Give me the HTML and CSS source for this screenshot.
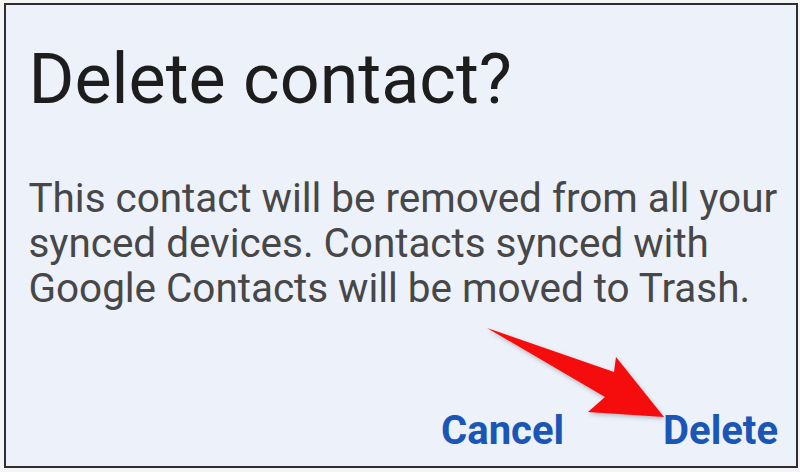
FILE: index.html
```html
<!DOCTYPE html>
<html>
<head>
<meta charset="utf-8">
<link rel="stylesheet" href="styles.css">
</head>
<body>
<div class="dialog">
  <h1 class="title">Delete contact?</h1>
  <p class="message">This contact will be removed from all your<br>synced devices. Contacts synced with<br>Google Contacts will be moved to Trash.</p>
  <div class="actions">
    <span class="btn">Cancel</span>
    <span class="btn">Delete</span>
  </div>
  <svg class="arrow" width="800" height="472" viewBox="0 0 800 472">
    <defs>
      <filter id="sh" x="-20%" y="-20%" width="140%" height="140%">
        <feDropShadow dx="1" dy="2" stdDeviation="2" flood-color="#000" flood-opacity="0.25"/>
      </filter>
    </defs>
    <polygon points="487,328 614,372 616,357 664,417 588,412 605,397" fill="#f50a0a" filter="url(#sh)"/>
  </svg>
</div>
</body>
</html>
```
FILE: styles.css
```css
html, body {
  margin: 0;
  padding: 0;
  background: #f4f4f4;
  width: 800px;
  height: 472px;
  overflow: hidden;
}
.dialog {
  position: relative;
  box-sizing: border-box;
  margin: 3px 0 0 4px;
  width: 794px;
  height: 465px;
  border: 2px solid #2e2e2e;
  background: #edf1fa;
  padding: 32.6px 18px 0 22.5px;
  font-family: Roboto, "Noto Sans", sans-serif;
}
.title {
  margin: 0;
  font-size: 70px;
  line-height: 82px;
  font-weight: 400;
  color: #1d1d1d;
  white-space: nowrap;
}
.message {
  margin: 56.5px 0 0 0;
  font-size: 40.5px;
  line-height: 45px;
  color: #474747;
  font-weight: 400;
  white-space: nowrap;
  letter-spacing: -0.05px;
}
.actions {
  margin-top: 95.7px;
  display: flex;
  justify-content: flex-end;
  gap: 99px;
}
.btn {
  font-size: 40px;
  line-height: 48px;
  font-weight: 700;
  color: #1a56b5;
}
.arrow {
  position: absolute;
  left: -6px;
  top: -5px;
  pointer-events: none;
}
```
